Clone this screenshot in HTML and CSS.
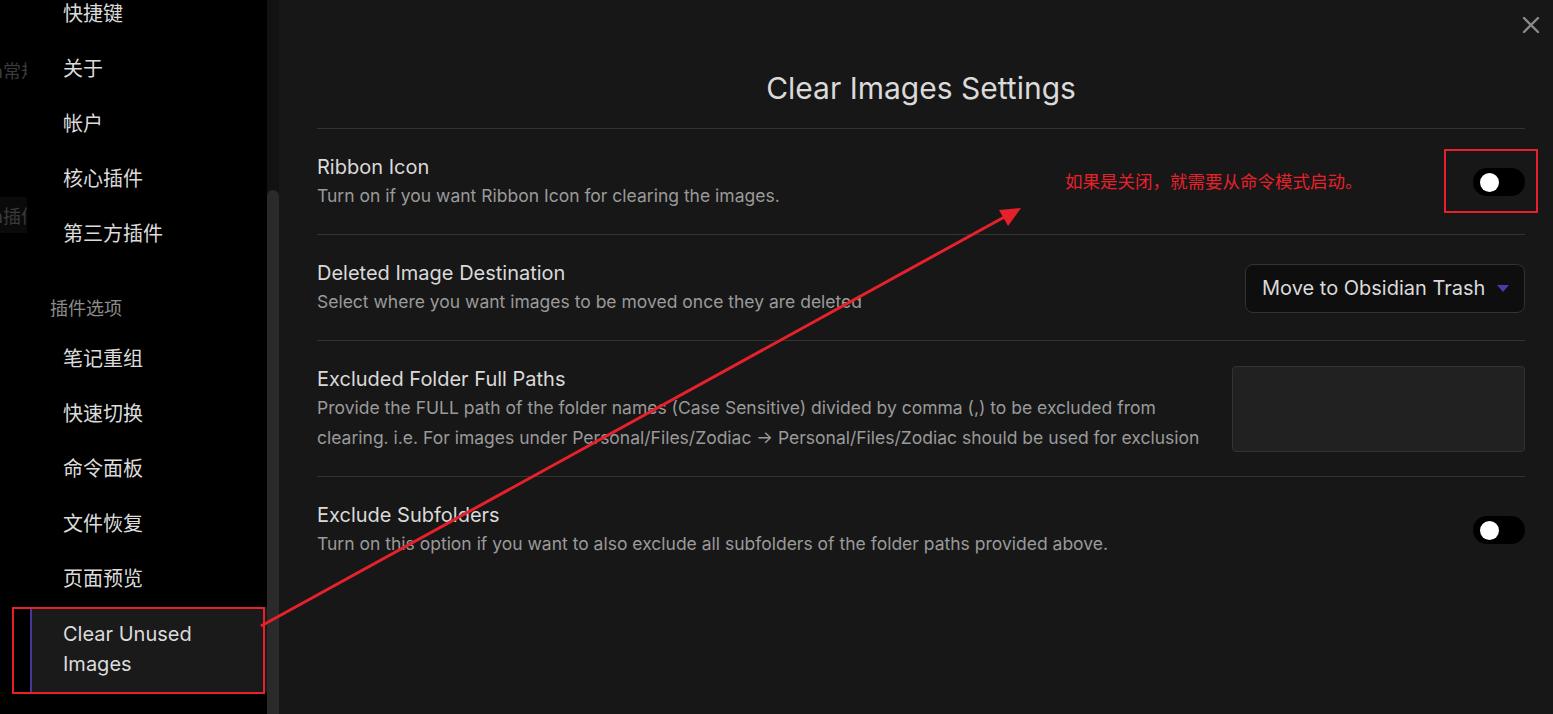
FILE: index.html
```html
<!DOCTYPE html>
<html lang="zh">
<head>
<meta charset="utf-8">
<link rel="stylesheet" href="styles.css">
</head>
<body>
<div class="app">
  <aside class="sidebar">
    <div class="ghost ghost-1">n常规</div>
    <div class="ghost ghost-2">n插件</div>
    <nav class="nav">
      <div class="nav-item">快捷键</div>
      <div class="nav-item">关于</div>
      <div class="nav-item">帐户</div>
      <div class="nav-item">核心插件</div>
      <div class="nav-item">第三方插件</div>
      <div class="nav-heading">插件选项</div>
      <div class="nav-item">笔记重组</div>
      <div class="nav-item">快速切换</div>
      <div class="nav-item">命令面板</div>
      <div class="nav-item">文件恢复</div>
      <div class="nav-item">页面预览</div>
      <div class="nav-item active">Clear Unused<br>Images</div>
    </nav>
  </aside>
  <div class="scrollbar"><div class="thumb"></div></div>
  <main class="content">
    <h1 class="title">Clear Images Settings</h1>
    <div class="setting">
      <div class="info">
        <div class="name">Ribbon Icon</div>
        <div class="desc">Turn on if you want Ribbon Icon for clearing the images.</div>
      </div>
      <div class="toggle"><span class="knob"></span></div>
    </div>
    <div class="setting">
      <div class="info">
        <div class="name">Deleted Image Destination</div>
        <div class="desc">Select where you want images to be moved once they are deleted</div>
      </div>
      <div class="dropdown">Move to Obsidian Trash<span class="caret"></span></div>
    </div>
    <div class="setting">
      <div class="info">
        <div class="name">Excluded Folder Full Paths</div>
        <div class="desc">Provide the FULL path of the folder names (Case Sensitive) divided by comma (,) to be excluded from clearing. i.e. For images under Personal/Files/Zodiac → Personal/Files/Zodiac should be used for exclusion</div>
      </div>
      <div class="textarea"></div>
    </div>
    <div class="setting">
      <div class="info">
        <div class="name">Exclude Subfolders</div>
        <div class="desc">Turn on this option if you want to also exclude all subfolders of the folder paths provided above.</div>
      </div>
      <div class="toggle"><span class="knob"></span></div>
    </div>
  </main>
</div>
<div class="close">
  <svg width="18" height="18" viewBox="0 0 18 18"><path d="M2 2L16 16M16 2L2 16" stroke="#8a8a8a" stroke-width="2.4" stroke-linecap="round"/></svg>
</div>
<div class="note">如果是关闭，就需要从命令模式启动。</div>
<div class="mark mark-toggle"></div>
<div class="mark mark-nav"></div>
<svg class="arrow" width="1553" height="714" viewBox="0 0 1553 714">
  <line x1="261" y1="626" x2="1008" y2="215" stroke="#e6212b" stroke-width="3"/>
  <polygon points="1021,208 999,210 1008,226" fill="#e6212b"/>
</svg>
</body>
</html>
```
FILE: styles.css
```css
* { box-sizing: border-box; }
html, body { margin: 0; padding: 0; }
body {
  width: 1553px;
  height: 714px;
  overflow: hidden;
  background: #171717;
  font-family: Inter, "Noto Sans CJK SC", sans-serif;
  position: relative;
}
.app {
  display: flex;
  height: 714px;
}
.sidebar {
  width: 267px;
  flex: none;
  background: #000;
  position: relative;
  overflow: hidden;
}
.ghost {
  position: absolute;
  left: -8px;
  width: 35px;
  overflow: hidden;
  white-space: nowrap;
  color: #3b3b3b;
  font-size: 18px;
  font-family: "Noto Sans CJK SC", sans-serif;
  line-height: 36px;
}
.ghost-1 { top: 52px; }
.ghost-2 { top: 197px; background: #0a0a0a; }
.nav {
  margin-top: -13px;
  position: relative;
}
.nav-item {
  margin-left: 30px;
  padding: 12px 0 13px 33px;
  font-size: 20px;
  line-height: 30px;
  color: #dcdcdc;
}
.nav-item.active {
  background: #1a1a1a;
  border-left: 2px solid #483699;
  padding-left: 31px;
}
.nav-heading {
  margin-left: 30px;
  padding: 33px 0 13px 20px;
  font-size: 18px;
  line-height: 24px;
  color: #8c8c8c;
  font-family: "Noto Sans CJK SC", sans-serif;
}
.scrollbar {
  width: 12px;
  flex: none;
  background: #121212;
  display: flex;
  flex-direction: column;
  padding-top: 190px;
}
.thumb {
  flex: 1;
  background: #2a2a2a;
  border-radius: 6px 6px 0 0;
}
.content {
  flex: 1;
  padding: 0 28px 0 38px;
}
.title {
  margin: 0;
  padding-top: 68px;
  height: 129px;
  text-align: center;
  font-weight: 400;
  font-size: 30px;
  line-height: 40px;
  color: #dadada;
  border-bottom: 1px solid #333;
}
.setting {
  display: flex;
  align-items: center;
  gap: 22px;
  padding: 24px 0 23px;
  border-bottom: 1px solid #333;
}
.setting:last-child { border-bottom: none; }
.info { flex: 1; }
.name {
  font-size: 20px;
  line-height: 28px;
  color: #dadada;
}
.desc {
  font-size: 17.5px;
  line-height: 30px;
  color: #9a9a9a;
}
.toggle {
  width: 52px;
  height: 28px;
  border-radius: 14px;
  background: #000;
  flex: none;
  display: flex;
  align-items: center;
  padding-left: 7px;
}
.knob {
  width: 19px;
  height: 19px;
  border-radius: 50%;
  background: #fff;
}
.dropdown {
  flex: none;
  width: 280px;
  height: 49px;
  background: #0e0e0e;
  border: 1px solid #333;
  border-radius: 8px;
  display: flex;
  align-items: center;
  justify-content: space-between;
  padding: 0 15px 0 16px;
  font-size: 20px;
  color: #dadada;
}
.caret {
  width: 0;
  height: 0;
  border-left: 6px solid transparent;
  border-right: 6px solid transparent;
  border-top: 7px solid #4b3aa8;
}
.textarea {
  flex: none;
  width: 293px;
  height: 86px;
  background: #212121;
  border: 1px solid #333;
  border-radius: 4px;
}
.close {
  position: absolute;
  left: 1522px;
  top: 16px;
  width: 18px;
  height: 18px;
  display: flex;
}
.note {
  position: absolute;
  left: 1065px;
  top: 168px;
  font-size: 17.5px;
  line-height: 26px;
  color: #e6212b;
  font-family: "Noto Sans CJK SC", sans-serif;
}
.mark {
  position: absolute;
  border: 2px solid #e6212b;
}
.mark-toggle { left: 1444px; top: 149px; width: 94px; height: 64px; }
.mark-nav { left: 12px; top: 607px; width: 253px; height: 87px; }
.arrow {
  position: absolute;
  left: 0;
  top: 0;
  pointer-events: none;
}
```
